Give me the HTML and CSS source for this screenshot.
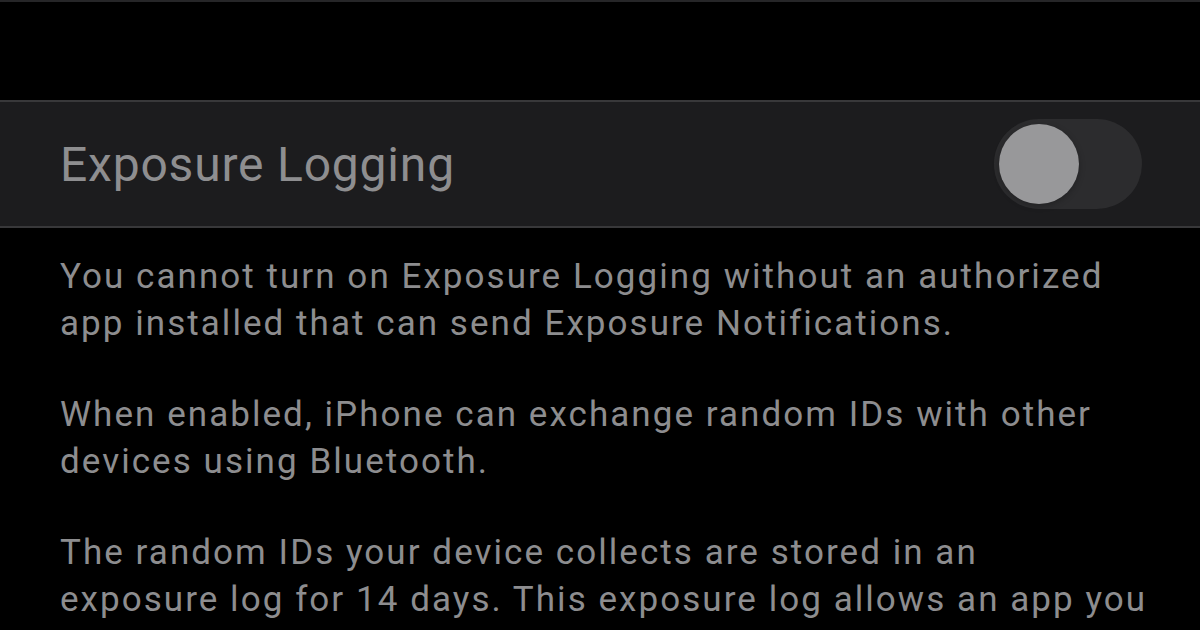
FILE: index.html
```html
<!DOCTYPE html>
<html lang="en">
<head>
    <meta charset="UTF-8">
    <meta name="viewport" content="width=device-width, initial-scale=1.0">
    <title>Exposure Logging</title>
    <link rel="stylesheet" href="styles.css">
</head>
<body>
    <div class="screen">
        <div class="top-gap"></div>

        <div class="group">
            <div class="cell">
                <span class="cell-label">Exposure Logging</span>
                <div class="switch" role="switch" aria-checked="false">
                    <div class="knob"></div>
                </div>
            </div>
        </div>

        <div class="footer">
            <p>You cannot turn on Exposure Logging without an authorized app installed that can send Exposure Notifications.</p>
            <p>When enabled, iPhone can exchange random IDs with other devices using Bluetooth.</p>
            <p>The random IDs your device collects are stored in an<br>exposure log for 14 days. This exposure log allows an app you</p>
        </div>
    </div>
</body>
</html>
```

FILE: styles.css
```css
body {
    margin: 0;
    padding: 0;
    background-color: #000;
    font-family: Roboto, "Liberation Sans", sans-serif;
    overflow: hidden;
}

.screen {
    width: 1200px;
    height: 630px;
    border-top: 2px solid #262628;
    box-sizing: border-box;
    overflow: hidden;
}

.top-gap {
    height: 98px;
}

.group {
    background-color: #1c1c1e;
    border-top: 2px solid #38383a;
    border-bottom: 2px solid #38383a;
}

.cell {
    display: flex;
    align-items: center;
    justify-content: space-between;
    height: 124px;
    padding: 0 58px 0 60px;
}

.cell-label {
    font-size: 48px;
    color: #8e8e90;
    letter-spacing: 0.8px;
}

.switch {
    width: 148px;
    height: 90px;
    border-radius: 45px;
    background-color: #2c2c2e;
    display: flex;
    align-items: center;
    padding: 0 5px;
    box-sizing: border-box;
}

.knob {
    width: 80px;
    height: 80px;
    border-radius: 50%;
    background-color: #98989a;
    box-shadow: 0 2px 6px rgba(0, 0, 0, 0.25);
}

.footer {
    padding: 25px 48px 0 60px;
}

.footer p {
    margin: 0 0 44px 0;
    font-size: 35px;
    line-height: 47px;
    color: #8d8d8f;
    letter-spacing: 2.05px;
}
```
